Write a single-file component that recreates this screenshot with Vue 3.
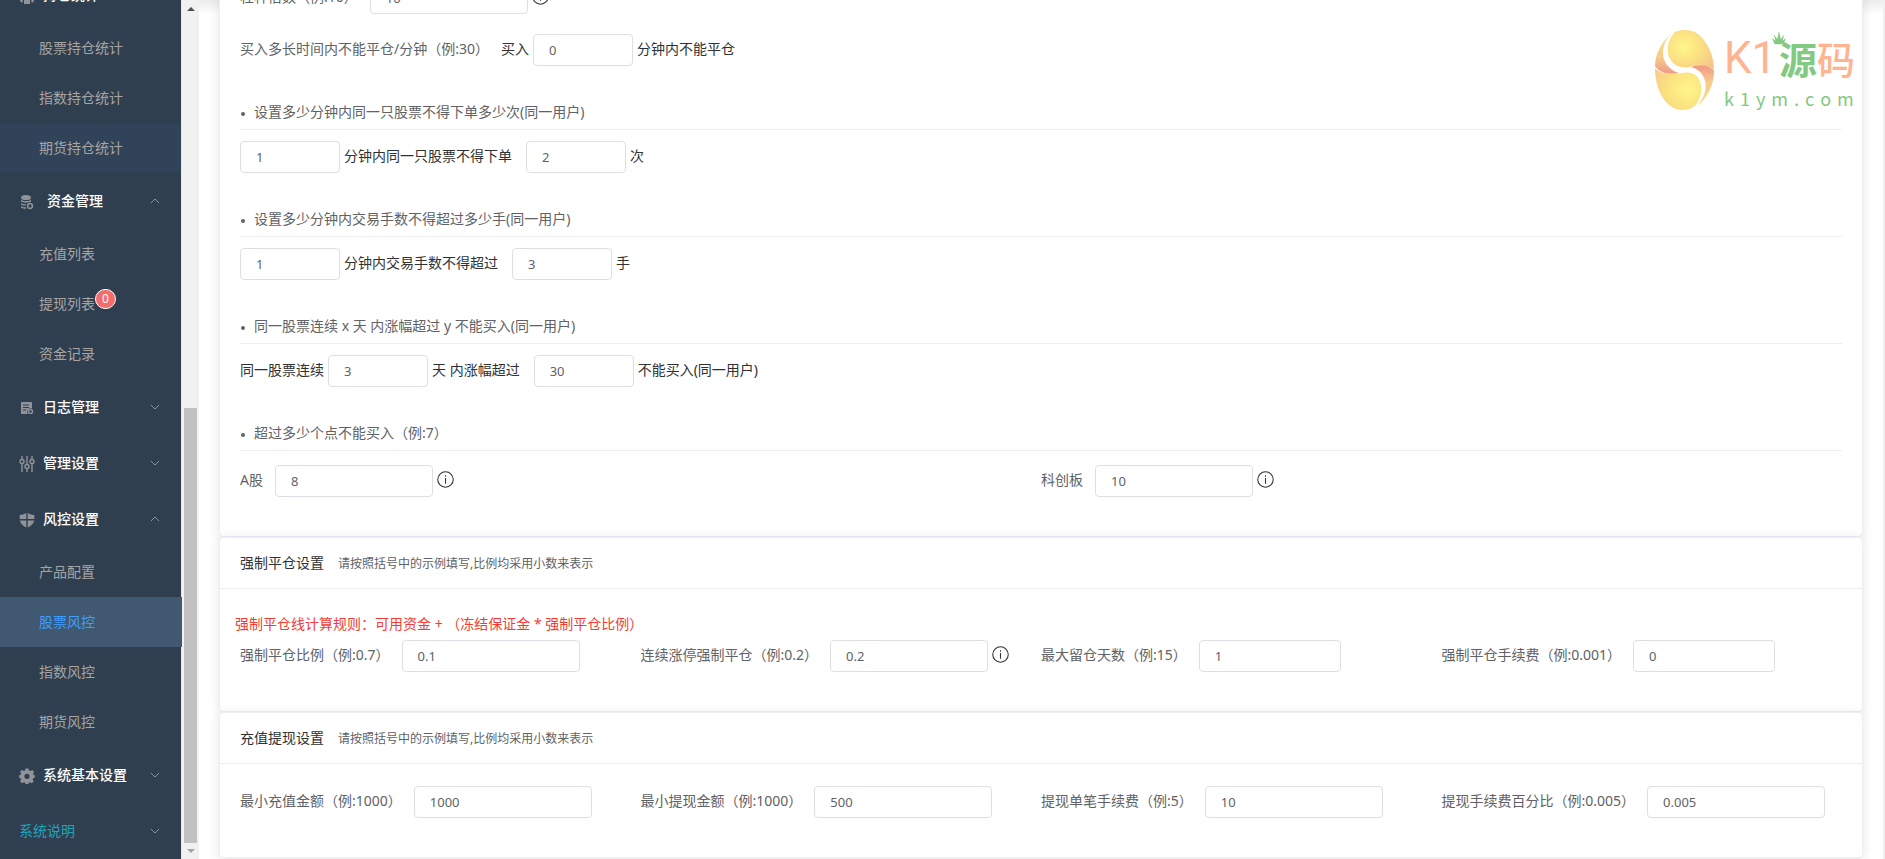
<script setup>
import { reactive } from 'vue'

const menu = [
  {
    title: '持仓统计', icon: 'team', open: true,
    items: [{ text: '股票持仓统计' }, { text: '指数持仓统计' }, { text: '期货持仓统计', state: 'hover' }],
  },
  {
    title: '资金管理', icon: 'coins', open: true,
    items: [{ text: '充值列表' }, { text: '提现列表', badge: '0' }, { text: '资金记录' }],
  },
  { title: '日志管理', icon: 'log', open: false, items: [] },
  { title: '管理设置', icon: 'sliders', open: false, items: [] },
  {
    title: '风控设置', icon: 'shield', open: true,
    items: [{ text: '产品配置' }, { text: '股票风控', state: 'active' }, { text: '指数风控' }, { text: '期货风控' }],
  },
  { title: '系统基本设置', icon: 'gear', open: false, items: [] },
  { title: '系统说明', icon: '', open: false, items: [] },
]

const form = reactive({
  lever: '10', holdMinutes: '0',
  orderMinutes: '1', orderTimes: '2',
  lotMinutes: '1', lotCount: '3',
  riseDays: '3', riseRate: '30',
  aLimit: '8', kLimit: '10',
})

const closeFields = reactive([
  { id: 'forceRate', label: '强制平仓比例（例:0.7）', value: '0.1', size: 'wide' },
  { id: 'forceStop', label: '连续涨停强制平仓（例:0.2）', value: '0.2', size: 'mid', info: true },
  { id: 'maxDays', label: '最大留仓天数（例:15）', value: '1', size: 'narrow' },
  { id: 'forceFee', label: '强制平仓手续费（例:0.001）', value: '0', size: 'narrow' },
])

const cashFields = reactive([
  { id: 'minCharge', label: '最小充值金额（例:1000）', value: '1000', size: 'wide' },
  { id: 'minWithdraw', label: '最小提现金额（例:1000）', value: '500', size: 'wide' },
  { id: 'singleFee', label: '提现单笔手续费（例:5）', value: '10', size: 'wide' },
  { id: 'percentFee', label: '提现手续费百分比（例:0.005）', value: '0.005', size: 'wide' },
])
</script>

<template>
  <div class="app">
    <nav class="sidebar">
      <div v-for="g in menu" :key="g.title" class="group">
        <button type="button" class="group-title" :class="{ plain: !g.icon, spaced: g.icon === 'coins' }">
          <svg v-if="g.icon" class="menu-icon" viewBox="0 0 16 16" aria-hidden="true">
            <g v-if="g.icon === 'team'">
              <circle cx="8" cy="7" r="4" />
              <path d="M1 9l3 4-1 2-2-2zM15 9l-3 4 1 2 2-2zM5 12h6v4H5z" />
            </g>
            <g v-else-if="g.icon === 'coins'">
              <ellipse cx="7" cy="3.500" rx="5" ry="2.600" />
              <path d="M2 5.500c1 2 9 2 10 0v2C10 9 4 9 2 7.500zM2 9c1 1 3 1.300 5 1.200v1.300C5 11.500 3 11.500 2 10.500zM2 12c1 1 3 1.300 5 1.200v1.600c-2 0-4-.3-5-1.300z" />
              <circle cx="11" cy="12" r="2.400" fill="none" stroke="#909399" stroke-width="1.500" />
            </g>
            <g v-else-if="g.icon === 'log'">
              <path fill-rule="evenodd" d="M3 2h9q1 0 1 1v5.500a3.500 3.500 0 0 0-4 5.500H2V3q0-1 1-1zM4 4.500v1h6v-1zM4 7v1h6V7zM4 9.500v1h3v-1z" />
              <circle cx="11.500" cy="11.500" r="2" fill="none" stroke="#909399" stroke-width="1.400" />
            </g>
            <g v-else-if="g.icon === 'sliders'" fill="none" stroke="#909399" stroke-width="1.400">
              <path d="M3 0v3M3 8v8M8 0v8M8 13v3M13 0v3M13 8v8" />
              <circle cx="3" cy="5.500" r="2" />
              <circle cx="8" cy="10.500" r="2" />
              <circle cx="13" cy="5.500" r="2" />
            </g>
            <g v-else-if="g.icon === 'shield'">
              <path d="M7.300 1v6H.7V3Q4 3 7.300 1zM8.700 1v6h6.600V3Q12 3 8.700 1zM.8 8.400h6.500v7Q2 13 .8 8.400zM15.200 8.400H8.700v7Q14 13 15.200 8.400z" />
            </g>
            <path
              v-else
              fill-rule="evenodd"
              d="M6.500.5h3l.5 2 1.300.6 1.900-1.100 1.900 1.900L14 5.800l.5 1.100 1.300.3v2.600l-1.500.4-.6 1.300 1 1.900-1.900 1.900-1.900-1-1.100.5-.4 1.400H6.600l-.5-1.400-1.200-.5-1.900 1-1.900-1.900 1-1.900-.5-1.300-1.400-.4V7.200l1.400-.4.5-1.200-1-1.800L3 1.900 4.900 3 6 2.500zM8 5.700a2.600 2.600 0 1 0 0 5.200 2.600 2.600 0 0 0 0-5.200z"
            />
          </svg>
          <span class="group-text">{{ g.title }}</span>
          <svg class="chevron" viewBox="0 0 10 6" aria-hidden="true">
            <path :d="g.open ? 'M1 5L5 1L9 5' : 'M1 1L5 5L9 1'" />
          </svg>
        </button>
        <a v-for="i in g.items" :key="i.text" href="#" class="item" :class="i.state">
          <span class="item-text">{{ i.text }}<sup v-if="i.badge" class="badge">{{ i.badge }}</sup></span>
        </a>
      </div>
    </nav>

    <div class="scrollbar" aria-hidden="true">
      <i class="arrow up"></i>
      <i class="thumb"></i>
      <i class="arrow down"></i>
    </div>

    <main class="main">
      <section class="card first">
        <div class="row">
          <label class="label" for="lever">杠杆倍数（例:10）</label>
          <input id="lever" v-model="form.lever" class="input mid" type="text">
          <svg class="info" viewBox="0 0 16 16"><circle cx="8" cy="8" r="7.300" /><path d="M8 4v1.400M8 6.500v5.500" /></svg>
        </div>
        <div class="row second">
          <label class="label" for="hold">买入多长时间内不能平仓/分钟（例:30）</label>
          <span class="text">买入</span>
          <input id="hold" v-model="form.holdMinutes" class="input small" type="text">
          <span class="text">分钟内不能平仓</span>
        </div>

        <h4 class="rule">设置多少分钟内同一只股票不得下单多少次(同一用户)</h4>
        <div class="row">
          <input v-model="form.orderMinutes" class="input small" type="text" aria-label="分钟">
          <label class="text before" for="orderTimes">分钟内同一只股票不得下单</label>
          <input id="orderTimes" v-model="form.orderTimes" class="input small" type="text">
          <span class="text">次</span>
        </div>

        <h4 class="rule">设置多少分钟内交易手数不得超过多少手(同一用户)</h4>
        <div class="row">
          <input v-model="form.lotMinutes" class="input small" type="text" aria-label="分钟">
          <label class="text before" for="lotCount">分钟内交易手数不得超过</label>
          <input id="lotCount" v-model="form.lotCount" class="input small" type="text">
          <span class="text">手</span>
        </div>

        <h4 class="rule">同一股票连续 x 天 内涨幅超过 y 不能买入(同一用户)</h4>
        <div class="row">
          <label class="text" for="riseDays">同一股票连续</label>
          <input id="riseDays" v-model="form.riseDays" class="input small" type="text">
          <label class="text before" for="riseRate">天 内涨幅超过</label>
          <input id="riseRate" v-model="form.riseRate" class="input small" type="text">
          <span class="text">不能买入(同一用户)</span>
        </div>

        <h4 class="rule">超过多少个点不能买入（例:7）</h4>
        <div class="halves">
          <div class="row">
            <label class="label" for="aLimit">A股</label>
            <input id="aLimit" v-model="form.aLimit" class="input mid" type="text">
            <svg class="info" viewBox="0 0 16 16"><circle cx="8" cy="8" r="7.300" /><path d="M8 4v1.400M8 6.500v5.500" /></svg>
          </div>
          <div class="row">
            <label class="label" for="kLimit">科创板</label>
            <input id="kLimit" v-model="form.kLimit" class="input mid" type="text">
            <svg class="info" viewBox="0 0 16 16"><circle cx="8" cy="8" r="7.300" /><path d="M8 4v1.400M8 6.500v5.500" /></svg>
          </div>
        </div>
      </section>

      <section class="card">
        <header class="head"><h3>强制平仓设置</h3><small>请按照括号中的示例填写,比例均采用小数来表示</small></header>
        <div class="body close">
          <p class="warn">强制平仓线计算规则：可用资金 + （冻结保证金 * 强制平仓比例）</p>
          <div class="quarters">
            <div v-for="f in closeFields" :key="f.id" class="row">
              <label class="label" :for="f.id">{{ f.label }}</label>
              <input :id="f.id" v-model="f.value" class="input" :class="f.size" type="text">
              <svg v-if="f.info" class="info" viewBox="0 0 16 16"><circle cx="8" cy="8" r="7.300" /><path d="M8 4v1.400M8 6.500v5.500" /></svg>
            </div>
          </div>
        </div>
      </section>

      <section class="card">
        <header class="head"><h3>充值提现设置</h3><small>请按照括号中的示例填写,比例均采用小数来表示</small></header>
        <div class="body">
          <div class="quarters">
            <div v-for="f in cashFields" :key="f.id" class="row">
              <label class="label" :for="f.id">{{ f.label }}</label>
              <input :id="f.id" v-model="f.value" class="input" :class="f.size" type="text">
            </div>
          </div>
        </div>
      </section>

      <div class="logo">
        <svg class="egg" viewBox="0 0 59 80" aria-hidden="true">
          <defs>
            <radialGradient id="eggTop" cx="0.35" cy="0.42" r="0.75">
              <stop offset="0" stop-color="#fff68a" />
              <stop offset="0.5" stop-color="#fbe083" />
              <stop offset="1" stop-color="#f6c58b" />
            </radialGradient>
            <radialGradient id="eggBottom" cx="0.7" cy="0.5" r="0.8">
              <stop offset="0" stop-color="#fff68a" />
              <stop offset="0.6" stop-color="#fae07f" />
              <stop offset="1" stop-color="#f8ca8c" />
            </radialGradient>
            <linearGradient id="eggEdge" x1="0" y1="0" x2="0" y2="1">
              <stop offset="0" stop-color="#fae08a" />
              <stop offset="0.6" stop-color="#f6cb8c" />
              <stop offset="1" stop-color="#f09a86" />
            </linearGradient>
            <linearGradient id="eggEdgeRight" x1="0" y1="1" x2="0" y2="0">
              <stop offset="0" stop-color="#fae08a" />
              <stop offset="0.6" stop-color="#f6cb8c" />
              <stop offset="1" stop-color="#f09a86" />
            </linearGradient>
          </defs>
          <path fill="url(#eggTop)" d="M20 2C27-1 36-1 43 4C53 12 59 26 59 40C53 35 44 35 34 37C26 39 17 35 14 27C11 18 14 8 20 2z" />
          <path fill="url(#eggEdge)" d="M18 3C7 10 0 24 0 36C4 43 14 45 24 43C14 40 8 32 8 23C8 14 12 8 18 3z" />
          <path fill="url(#eggBottom)" d="M0 38C5 44 16 45 27 43C38 41 45 46 46 56C47 66 43 74 37 78C30 81 21 81 14 75C5 67 0 53 0 38z" />
          <path fill="url(#eggEdgeRight)" d="M36 37C46 34 56 36 59 41C59 55 52 69 42 76C49 68 52 59 50 51C48 43 43 39 36 37z" />
        </svg>
        <div class="words">
          <div class="brand">
            <span class="latin">K1</span>
            <span class="cn"><b>源</b><i>码</i></span>
            <svg class="crown" viewBox="0 0 16 16" aria-hidden="true"><path d="M3 15L0 8l4 3L2 4l4 5 2-9 2 9 4-5-2 7 4-3-3 7z" /></svg>
          </div>
          <div class="domain">k&#8196;1&#8196;y&#8196;m&#8196;.&#8196;c&#8196;o&#8196;m</div>
        </div>
      </div>
    </main>
  </div>
</template>

<style>
body {
  background: #fff;
}
</style>

<style scoped>
.app {
  display: flex;
  height: 100vh;
  overflow: hidden;
  font: 14px/20px "Noto Sans", "Noto Sans CJK SC", sans-serif;
  color: #303133;
}
.app *,
.app *::before {
  box-sizing: border-box;
}
.sidebar {
  flex: none;
  display: flex;
  flex-direction: column;
  justify-content: flex-end;
  width: 182px;
  background: #2f3f50;
  border-right: 1px solid #e6e6e6;
}
.group {
  flex: none;
}
.group-title {
  display: flex;
  align-items: center;
  width: 100%;
  height: 56px;
  padding: 0 21px 0 19px;
  border: 0;
  background: none;
  color: #fff;
  font: inherit;
  font-weight: 500;
  text-align: left;
}
.group-title.plain {
  color: #20a5ba;
  font-weight: 400;
}
.menu-icon {
  width: 16px;
  height: 16px;
  margin: 2px 8px 0 0;
  fill: #909399;
}
.spaced .menu-icon {
  margin-right: 12px;
}
.group-text {
  flex: 1;
}
.chevron {
  width: 10px;
  height: 6px;
  fill: none;
  stroke: #909399;
}
.item {
  display: flex;
  align-items: center;
  height: 50px;
  margin-right: -1px;
  padding-left: 39px;
  color: #a5a5a5;
  text-decoration: none;
}
.item.hover {
  margin-right: 0;
  background: #314358;
}
.item.active {
  background: #405870;
  color: #409eff;
}
.item-text {
  position: relative;
}
.badge {
  position: absolute;
  left: 56px;
  top: -5px;
  width: 21px;
  height: 20px;
  border: 1px solid #fff;
  border-radius: 10px;
  background: #f56c6c;
  color: #fff;
  font-size: 12px;
  line-height: 18px;
  text-align: center;
}
.scrollbar {
  flex: none;
  display: flex;
  flex-direction: column;
  align-items: center;
  justify-content: flex-end;
  width: 17px;
  padding: 7px 0 6px;
  background: #f1f1f1;
}
.arrow {
  border: 4px solid transparent;
  border-top-width: 0;
  border-bottom: 4px solid #505050;
}
.arrow.up {
  margin-bottom: auto;
}
.arrow.down {
  border-top: 4px solid #a3a3a3;
  border-bottom-width: 0;
  margin-top: 6px;
}
.thumb {
  width: 13px;
  height: calc(51% + 4px);
  background: #c1c1c1;
}
.main {
  position: relative;
  flex: 1;
  min-width: 0;
  padding: 0 20px;
  overflow: hidden;
  border-right: 2px solid #f0f0f0;
  background: linear-gradient(#ececec, #fff 14px);
}
.card {
  border: 1px solid #ebeef5;
  border-radius: 4px;
  background: #fff;
  box-shadow: 0 2px 12px rgba(0, 0, 0, 0.1);
}
.first {
  margin-top: -40px;
  padding: 21px 20px 39px;
}
.row {
  display: flex;
  align-items: center;
  white-space: nowrap;
}
.second {
  margin-top: 20px;
}
.label {
  padding: 0 12px 2px 0;
  color: #606266;
}
.text {
  padding: 0 4px 2px;
}
.text:first-child,
.label + .text {
  padding-left: 0;
}
.before {
  padding-right: 14px;
}
.input {
  height: 32px;
  padding: 0 15px;
  border: 1px solid #dcdfe6;
  border-radius: 4px;
  background: #fff;
  color: #606266;
  font: 13px "Noto Sans", sans-serif;
  outline: none;
}
.small { width: 100px; }
.narrow { width: 142px; }
.mid { width: 158px; }
.wide { width: 178px; }
.info {
  width: 17px;
  height: 17px;
  margin: 0 0 4px 4px;
  fill: none;
  stroke: #303133;
}
.rule {
  display: flex;
  align-items: center;
  height: 34px;
  margin: 30px 0 11px;
  padding-bottom: 2px;
  border-bottom: 1px solid #ebeef5;
  color: #606266;
  font-size: 14px;
  font-weight: 400;
}
.rule::before {
  content: "";
  width: 4px;
  height: 4px;
  margin: 4px 9px 0 1px;
  border-radius: 2px;
  background: #606266;
}
.halves,
.quarters {
  display: grid;
  grid-template-columns: repeat(2, 1fr);
}
.halves {
  padding-top: 3px;
}
.quarters {
  grid-template-columns: repeat(4, 1fr);
}
.head {
  display: flex;
  align-items: center;
  gap: 14px;
  height: 51px;
  padding: 0 20px;
  border-bottom: 1px solid #ebeef5;
}
.head h3 {
  margin: 0;
  font-size: 14px;
  font-weight: 400;
}
.head small {
  padding-top: 1px;
  font-size: 12px;
  color: #606266;
}
.body {
  padding: 22px 20px 39px;
}
.close {
  padding-top: 24px;
}
.warn {
  margin: 0 0 5px -5px;
  color: #f43c32;
  line-height: 22px;
}
.logo {
  position: absolute;
  top: 30px;
  right: 28px;
  display: flex;
  gap: 10px;
}
.egg {
  width: 59px;
  height: 80px;
}
.words {
  width: 131px;
  white-space: nowrap;
}
.brand {
  position: relative;
  display: flex;
  justify-content: space-between;
  height: 58px;
}
.latin {
  color: #ffb38f;
  font: 400 44px/48px Roboto, sans-serif;
  padding-top: 4px;
}
.cn {
  display: flex;
  font: 500 38px/56px "Noto Sans CJK SC", sans-serif;
}
.cn b {
  color: #82c981;
  font-weight: 700;
}
.cn i {
  color: #ffb38f;
  font-style: normal;
}
.crown {
  position: absolute;
  left: 48px;
  top: 1px;
  width: 14px;
  height: 14px;
  fill: #82c981;
}
.domain {
  color: #82c981;
  font: 18px/20px "Noto Sans CJK SC", sans-serif;
}
</style>
